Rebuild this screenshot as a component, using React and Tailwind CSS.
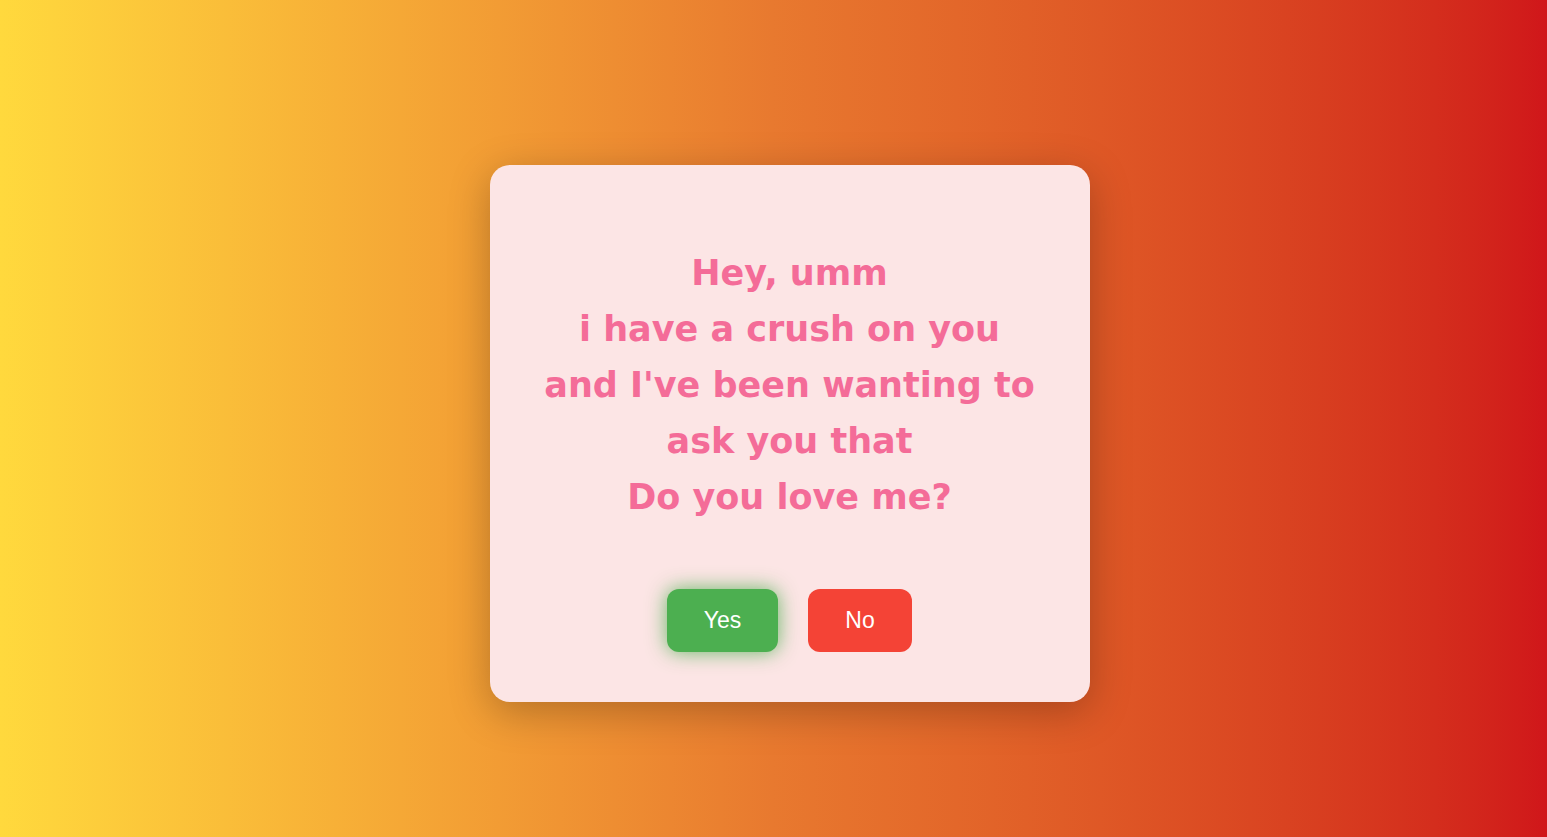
export default function App() {
  const lines = [
    "Hey, umm",
    "i have a crush on you",
    "and I've been wanting to",
    "ask you that",
    "Do you love me?",
  ];
  return (
    <div className="min-h-screen h-[837px] w-full bg-gradient-to-r from-[#ffd93d] via-[#e8792f] to-[#d0161a] flex items-start justify-center pt-[165px] pl-[32px]">
      <div className="w-[600px] h-[537px] rounded-[20px] bg-[#fce5e5] shadow-[0_10px_40px_rgba(0,0,0,0.25)] flex flex-col items-center pt-[80px]">
        <h1
          className="text-center text-[#f46c98] text-[35px] leading-[56px] font-bold"
          style={{ fontFamily: '"Comic Sans MS", "DejaVu Sans", sans-serif' }}
        >
          {lines.map((l) => (
            <div key={l}>{l}</div>
          ))}
        </h1>
        <div
          className="flex gap-[30px] mt-[64px]"
          style={{ fontFamily: '"Liberation Sans", Arial, sans-serif' }}
        >
          <button className="w-[111px] h-[63px] rounded-[12px] bg-[#4caf50] text-white text-[23px] shadow-[0_0_20px_rgba(76,175,80,0.85)]">
            Yes
          </button>
          <button className="w-[104px] h-[63px] rounded-[12px] bg-[#f44336] text-white text-[23px]">
            No
          </button>
        </div>
      </div>
    </div>
  );
}
